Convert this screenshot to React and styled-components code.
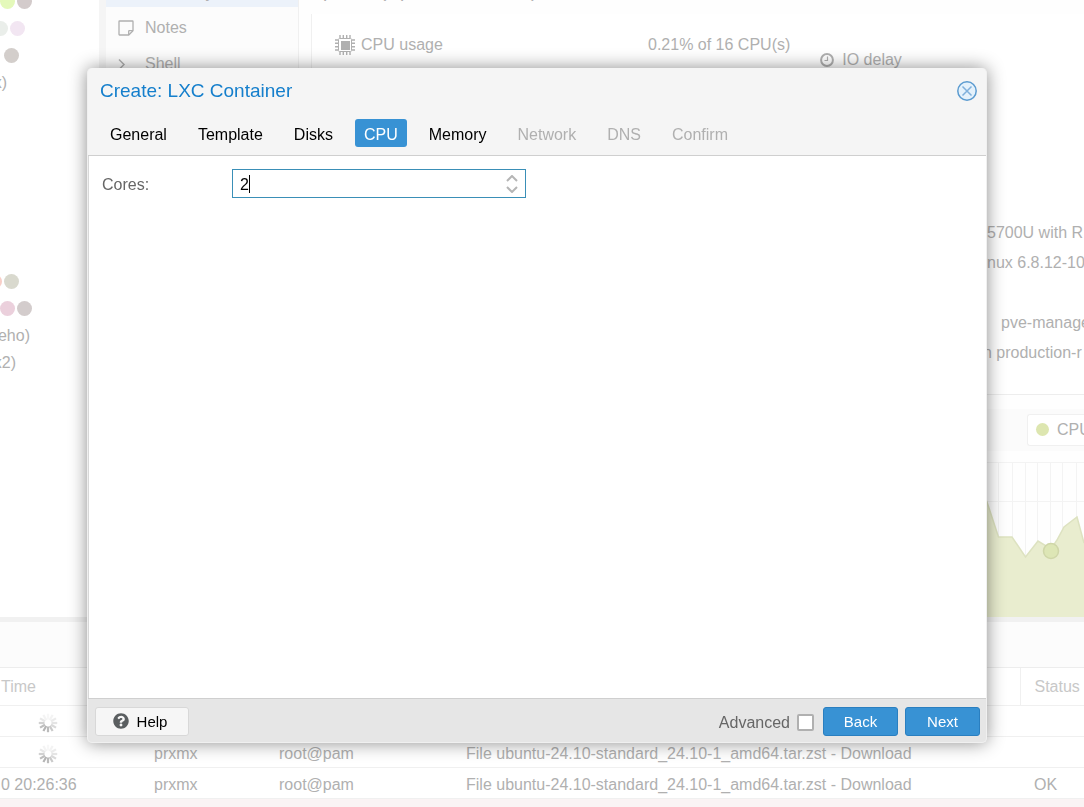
import React, { useState } from 'react'
import styled, { createGlobalStyle } from 'styled-components'
import { FaQuestionCircle } from 'react-icons/fa'

const tabs = [
    { name: 'General' },
    { name: 'Template' },
    { name: 'Disks' },
    { name: 'CPU' },
    { name: 'Memory' },
    { name: 'Network', disabled: true },
    { name: 'DNS', disabled: true },
    { name: 'Confirm', disabled: true },
]

const tasks = [
    { running: true },
    { running: true, node: 'prxmx', user: 'root@pam', text: 'File ubuntu-24.10-standard_24.10-1_amd64.tar.zst - Download' },
    { time: '0 20:26:36', node: 'prxmx', user: 'root@pam', text: 'File ubuntu-24.10-standard_24.10-1_amd64.tar.zst - Download', status: 'OK' },
]

function NoteIcon() {
    return (
        <svg width="16" height="16" viewBox="0 0 16 16" fill="none" stroke="currentColor" strokeWidth="1.3">
            <path d="M1.500 1h13q.5 0 .5.500v9.200L10.700 15H1.500q-.5 0-.5-.5V1.500q0-.5.500-.5z" />
            <path d="M15 10.700h-3.700q-.6 0-.6.600V15" />
        </svg>
    )
}

function ShellIcon() {
    return (
        <svg width="16" height="16" viewBox="0 0 16 16" fill="none" stroke="currentColor" strokeWidth="1.5">
            <path d="M1 3.500l5 5-5 5" />
            <path d="M8 15h7" />
        </svg>
    )
}

function ChipIcon() {
    return (
        <svg width="20" height="20" viewBox="0 0 20 20" fill="none" stroke="currentColor">
            <rect x="3.500" y="3.500" width="13" height="13" rx="1" strokeWidth="1" />
            <rect x="6" y="6" width="9" height="9" fill="currentColor" stroke="none" />
            <path
                strokeWidth="1.400"
                d="M5 0v3M8.300 0v3M11.700 0v3M15 0v3M5 17v3M8.300 17v3M11.700 17v3M15 17v3M0 5h3M0 8.300h3M0 11.700h3M0 15h3M17 5h3M17 8.300h3M17 11.700h3M17 15h3"
            />
        </svg>
    )
}

function ClockIcon() {
    return (
        <svg width="14" height="14" viewBox="0 0 14 14" fill="none" stroke="currentColor">
            <circle cx="7" cy="7" r="5.900" strokeWidth="2" />
            <path d="M7.500 3.500v4H4.500" strokeWidth="1.200" />
        </svg>
    )
}

function Spinner() {
    const spokes = [.1, .15, .25, .35, .5, .7, .9, 1, .85, .6, .3, .15]
    return (
        <svg width="20" height="20" viewBox="0 0 20 20" stroke="#b4b4b4" strokeWidth="2.200">
            {spokes.map((opacity, i) => (
                <path key={i} d="M10 .8v5.700" opacity={opacity} transform={`rotate(${i * 30} 10 10)`} />
            ))}
        </svg>
    )
}

function UsageChart() {
    return (
        <Chart width="100" height="155" viewBox="0 0 100 155" fill="none">
            <path d="M0 .5h100M0 39.500h100M14.500 0v155M28.500 0v155M41.500 0v155M53.500 0v155M66.500 0v155M78.500 0v155M92.500 0v155" stroke="#f3f3f3" />
            <path d="M0 32L4 43l10.500 32H28l13.500 20L54 79l13 8 6-9 7-13 13-10 7 26v74H0z" fill="#e9edcf" />
            <path d="M0 32L4 43l10.500 32H28l13.500 20L54 79l13 8 6-9 7-13 13-10 7 26" stroke="#dde2c0" strokeWidth="1.500" />
            <circle cx="67" cy="89" r="7.500" fill="#dde6b5" stroke="#cfd6a8" strokeWidth="1.500" />
        </Chart>
    )
}

function Background() {
    return (
        <Page>
            <Workspace>
                <Tree>
                    <FirstRow $end={32}><Dot $color="#e4f9ba" /><Dot $color="#d3cbcb" /></FirstRow>
                    <TreeRow $end={25}><Dot $color="#eaeeea" /><Dot $color="#f2e6f2" /></TreeRow>
                    <TreeRow $end={19}><Dot $color="#d3cecb" /></TreeRow>
                    <TreeRow $end={7}>x)</TreeRow>
                    <LowerRows>
                        <TreeRow $end={19}><Dot $color="#f8cfc8" /><Dot $color="#d9d9ce" /></TreeRow>
                        <TreeRow $end={32}><Dot $color="#ebd0dc" /><Dot $color="#d3cccc" /></TreeRow>
                        <TreeRow $end={30}>eho)</TreeRow>
                        <TreeRow $end={16}>x2)</TreeRow>
                    </LowerRows>
                </Tree>
                <Nav>
                    <ActiveItem>Summary</ActiveItem>
                    <NavItem><NoteIcon />Notes</NavItem>
                    <NavItem><ShellIcon />Shell</NavItem>
                </Nav>
                <Content>
                    <ContentTitle>prxmx (Uptime: 00:21:38)</ContentTitle>
                    <StatusCard>
                        <Usage>
                            <UsageName><ChipIcon />CPU usage</UsageName>
                            <span>0.21% of 16 CPU(s)</span>
                            <Delay><ClockIcon />IO delay</Delay>
                        </Usage>
                        <Info>
                            <InfoLine $indent={4}>5700U with R</InfoLine>
                            <InfoLine $indent={4}>nux 6.8.12-10</InfoLine>
                            <InfoLine />
                            <InfoLine $indent={18}>pve-manage</InfoLine>
                            <InfoLine>n production-r</InfoLine>
                        </Info>
                    </StatusCard>
                    <ChartPanel>
                        <ChartHeader>
                            <Legend><Dot $color="#dde6b0" $size={13} />CPU</Legend>
                        </ChartHeader>
                        <UsageChart />
                    </ChartPanel>
                </Content>
            </Workspace>
            <LogBar />
            <Log>
                <colgroup>
                    <col width="142" />
                    <col width="125" />
                    <col width="187" />
                    <col />
                    <col width="64" />
                </colgroup>
                <thead>
                    <tr><th>Time</th><th /><th /><th /><th>Status</th></tr>
                </thead>
                <tbody>
                    {tasks.map((task, i) => (
                        <tr key={i}>
                            <td>{task.running ? <SpinnerBox><Spinner /></SpinnerBox> : task.time}</td>
                            <td>{task.node}</td>
                            <td>{task.user}</td>
                            <td>{task.text}</td>
                            <td>{task.status}</td>
                        </tr>
                    ))}
                </tbody>
            </Log>
            <FailedRow />
        </Page>
    )
}

function App() {
    const [active, setActive] = useState('CPU')
    const [cores, setCores] = useState('2')
    const [advanced, setAdvanced] = useState(false)

    return (
        <>
            <GlobalStyle />
            <Background />
            <Overlay>
                <Dialog role="dialog" aria-labelledby="dialog-title">
                    <Header>
                        <TitleBar>
                            <Title id="dialog-title">Create: LXC Container</Title>
                            <CloseButton aria-label="Close">
                                <svg width="20" height="20" viewBox="0 0 20 20" fill="none">
                                    <circle cx="10" cy="10" r="9.200" fill="#e4f1fb" stroke="#5b9bd0" strokeWidth="1.500" />
                                    <path d="M5.500 5.500l9 9M14.500 5.500l-9 9" stroke="#7fb0dc" strokeWidth="1.500" />
                                </svg>
                            </CloseButton>
                        </TitleBar>
                        <Tabs>
                            {tabs.map(tab => (
                                <Tab
                                    key={tab.name}
                                    disabled={tab.disabled}
                                    $active={tab.name === active}
                                    onClick={() => setActive(tab.name)}
                                >
                                    {tab.name}
                                </Tab>
                            ))}
                        </Tabs>
                    </Header>
                    <Body>
                        <Label htmlFor="cores">Cores:</Label>
                        <Field>
                            <Input id="cores" value={cores} onChange={e => setCores(e.target.value)} />
                            <Caret />
                            <Stepper>
                                <StepButton aria-label="Increase" onClick={() => setCores(String(Number(cores) + 1))}>
                                    <svg width="12" height="7" viewBox="0 0 12 7"><path d="M1 6l5-5 5 5" /></svg>
                                </StepButton>
                                <StepButton aria-label="Decrease" onClick={() => setCores(String(Number(cores) - 1))}>
                                    <svg width="12" height="7" viewBox="0 0 12 7"><path d="M1 1l5 5 5-5" /></svg>
                                </StepButton>
                            </Stepper>
                        </Field>
                    </Body>
                    <Footer>
                        <HelpButton><FaQuestionCircle size={16} color="#5a5e60" />Help</HelpButton>
                        <Advanced>
                            Advanced
                            <Checkbox type="checkbox" checked={advanced} onChange={() => setAdvanced(!advanced)} />
                        </Advanced>
                        <PrimaryButton>Back</PrimaryButton>
                        <PrimaryButton>Next</PrimaryButton>
                    </Footer>
                </Dialog>
            </Overlay>
        </>
    )
}

export default App

const GlobalStyle = createGlobalStyle`
    * {
        box-sizing: border-box;
    }
    body {
        margin: 0;
        overflow: hidden;
        background: #fff;
    }
    body, button, input {
        font-family: "Liberation Sans", Arial, sans-serif;
        font-size: 16px;
    }
    svg {
        display: block;
        flex: none;
    }
`
const Page = styled.div`
    display: flex;
    flex-direction: column;
    height: 100vh;
    overflow: hidden;
    color: #b0b0b0;
    white-space: nowrap;
`
const Workspace = styled.div`
    display: flex;
    flex: 1;
    min-height: 0;
    border-bottom: 5px solid #f1f1f1;
`
const Tree = styled.div`
    width: 99px;
    overflow: hidden;
`
const TreeRow = styled.div`
    display: flex;
    align-items: center;
    justify-content: flex-end;
    gap: 2px;
    width: ${props => props.$end}px;
    height: 27px;
`
const FirstRow = styled(TreeRow)`
    align-items: flex-end;
    height: 15px;
    padding-bottom: 6px;
`
const LowerRows = styled.div`
    margin-top: 172px;
`
const Dot = styled.span`
    flex: none;
    width: ${props => props.$size || 15}px;
    height: ${props => props.$size || 15}px;
    border-radius: 50%;
    background: ${props => props.$color};
`
const Nav = styled.div`
    width: 200px;
    border-left: 7px solid #f5f5f5;
    border-right: 1px solid #f0f0f0;
    background: #fcfcfc;
`
const NavItem = styled.div`
    display: flex;
    align-items: center;
    gap: 11px;
    height: 36px;
    padding-left: 12px;

    &:nth-child(2) {
        margin-top: 3px;
    }
`
const ActiveItem = styled.div`
    display: flex;
    align-items: flex-end;
    height: 7px;
    padding: 0 0 5px 39px;
    background: #ecf2fa;
`
const Content = styled.div`
    display: flex;
    flex: 1;
    flex-direction: column;
    min-width: 0;
    padding-left: 12px;
    background: #fefefe;
`
const ContentTitle = styled.div`
    display: flex;
    align-items: flex-end;
    height: 14px;
    padding: 0 0 12px 12px;
    font-size: 19px;
`
const StatusCard = styled.div`
    display: flex;
    flex: 1;
    flex-direction: column;
    justify-content: space-between;
    padding: 16px 0 26px 23px;
    border-left: 1px solid #f0f0f0;
    border-bottom: 1px solid #ededed;
    background: #fff;
`
const Usage = styled.div`
    display: flex;
    align-items: flex-start;
    line-height: 30px;
`
const UsageName = styled.div`
    display: flex;
    align-items: center;
    gap: 6px;
    width: 313px;
`
const Delay = styled.div`
    display: flex;
    align-items: center;
    gap: 8px;
    padding: 15px 0 0 30px;
`
const Info = styled.div`
    align-self: flex-end;
    width: 101px;
    line-height: 30px;
`
const InfoLine = styled.div`
    height: 30px;
    padding-left: ${props => props.$indent || 0}px;
    overflow: hidden;
`
const ChartPanel = styled.div`
    display: flex;
    flex-direction: column;
    margin-top: 14px;
`
const ChartHeader = styled.div`
    display: flex;
    justify-content: flex-end;
    height: 42px;
    padding-top: 5px;
    background: #fbfbfb;
`
const Legend = styled.div`
    display: flex;
    align-items: center;
    gap: 8px;
    width: 57px;
    height: 32px;
    padding-left: 8px;
    border: 1px solid #f0f0f0;
    border-right: 0;
    border-radius: 3px 0 0 3px;
    background: #fff;
    overflow: hidden;
`
const Chart = styled.svg`
    align-self: flex-end;
    margin-top: 11px;
`
const LogBar = styled.div`
    height: 46px;
    background: #fcfcfc;
    border-bottom: 1px solid #ededed;
`
const Log = styled.table`
    width: 100%;
    table-layout: fixed;
    border-collapse: collapse;
    text-align: left;

    th, td {
        height: 31px;
        padding: 4px 0 0 12px;
        border-bottom: 1px solid #f0f0f0;
    }
    th {
        height: 38px;
        padding-top: 2px;
        font-weight: 400;
        color: #c8c8c8;
    }
    th:first-child, td:first-child {
        padding-left: 1px;
    }
    th:last-child, td:last-child {
        padding-left: 14px;
    }
    th:last-child {
        border-left: 1px solid #f0f0f0;
    }
`
const SpinnerBox = styled.div`
    padding-left: 37px;
`
const FailedRow = styled.div`
    height: 8px;
    background: #faf3f4;
`
const Overlay = styled.div`
    position: fixed;
    inset: 0;
    display: flex;
    padding: 68px 97px 64px 87px;
`
const Dialog = styled.div`
    display: flex;
    flex: 1;
    flex-direction: column;
    border: 1px solid #f0f0f0;
    border-top: 0;
    border-radius: 5px;
    background: #f5f5f5;
    box-shadow: 0 0 18px rgba(0, 0, 0, .45);
    overflow: hidden;
`
const Header = styled.div`
    padding: 12px 9px 8px 12px;
    border-bottom: 1px solid #cfcfcf;
`
const TitleBar = styled.div`
    display: flex;
    align-items: center;
    justify-content: space-between;
    height: 22px;
`
const Title = styled.h1`
    margin: 0;
    font-size: 19px;
    font-weight: 400;
    color: #157fcc;
`
const CloseButton = styled.button`
    padding: 0;
    border: 0;
    background: none;
    cursor: pointer;
`
const Tabs = styled.div`
    display: flex;
    gap: 13px;
    padding: 17px 0 0 1px;
`
const Tab = styled.button`
    height: 28px;
    padding: 3px 9px 0;
    border: 0;
    border-radius: 3px;
    background: ${props => props.$active ? '#3892d4' : 'transparent'};
    color: ${props => props.$active ? '#fff' : '#000'};
    cursor: pointer;

    &:disabled {
        color: #b0b0b0;
        cursor: default;
    }
`
const Body = styled.div`
    display: flex;
    flex: 1;
    align-items: flex-start;
    padding: 13px;
    border-left: 1px solid #d8d8d8;
    background: #fff;
`
const Label = styled.label`
    width: 130px;
    line-height: 32px;
    color: #666;
`
const Field = styled.div`
    position: relative;
    display: flex;
    width: 294px;
    height: 29px;
    border: 1px solid #3a8fb7;
    background: #fff;
`
const Input = styled.input`
    flex: 1;
    min-width: 0;
    padding: 2px 0 0 7px;
    border: 0;
    outline: 0;
    background: none;
    color: #000;
`
const Caret = styled.span`
    position: absolute;
    top: 5px;
    left: 16px;
    width: 1px;
    height: 18px;
    background: #000;
`
const Stepper = styled.div`
    display: flex;
    flex-direction: column;
    justify-content: center;
    gap: 4px;
    padding-right: 7px;
`
const StepButton = styled.button`
    padding: 0;
    border: 0;
    background: none;
    cursor: pointer;

    path {
        fill: none;
        stroke: #b5b5b5;
        stroke-width: 2;
    }
`
const Footer = styled.div`
    display: flex;
    align-items: center;
    gap: 7px;
    height: 44px;
    padding: 1px 6px 0 7px;
    border-top: 1px solid #cfcfcf;
    background: #e6e6e6;
`
const HelpButton = styled.button`
    display: flex;
    align-items: center;
    justify-content: center;
    gap: 8px;
    width: 94px;
    height: 29px;
    margin-right: auto;
    padding: 0 4px 0 0;
    border: 1px solid #d8d8d8;
    border-radius: 3px;
    background: #f6f6f6;
    color: #000;
    font-size: 15px;
    cursor: pointer;
`
const Advanced = styled.label`
    display: flex;
    align-items: center;
    gap: 7px;
    padding: 3px 2px 0 0;
    color: #666;
`
const Checkbox = styled.input`
    width: 17px;
    height: 17px;
    margin: 0;
    border: 2px solid #b0b0b0;
    border-radius: 2px;
    background: #fff;
    appearance: none;

    &:checked {
        background: #3892d4;
    }
`
const PrimaryButton = styled.button`
    width: 75px;
    height: 29px;
    padding: 0;
    border: 1px solid #2a7fc0;
    border-radius: 3px;
    background: #3892d4;
    color: #fff;
    font-size: 15px;
    cursor: pointer;
`
